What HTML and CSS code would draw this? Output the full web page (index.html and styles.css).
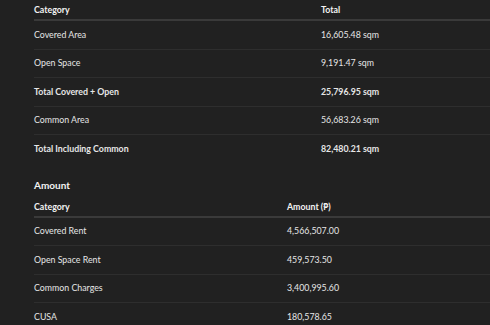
FILE: index.html
```html
<!DOCTYPE html>
<html lang="en">
<head>
	<meta charset="UTF-8">
	<meta name="viewport" content="width=device-width, initial-scale=1.0">
	<title>Area and Amount</title>
	<link rel="stylesheet" href="styles.css">
</head>
<body>

	<div class="summary">

		<table class="summary-table summary-area">
			<thead>
				<tr>
					<th>Category</th>
					<th>Total</th>
				</tr>
			</thead>
			<tbody>
				<tr>
					<td>Covered Area</td>
					<td>16,605.48 sqm</td>
				</tr>
				<tr>
					<td>Open Space</td>
					<td>9,191.47 sqm</td>
				</tr>
				<tr class="summary-total">
					<td>Total Covered + Open</td>
					<td>25,796.95 sqm</td>
				</tr>
				<tr>
					<td>Common Area</td>
					<td>56,683.26 sqm</td>
				</tr>
				<tr class="summary-total">
					<td>Total Including Common</td>
					<td>82,480.21 sqm</td>
				</tr>
			</tbody>
		</table>

		<h2 class="summary-title">Amount</h2>

		<table class="summary-table summary-amount">
			<thead>
				<tr>
					<th>Category</th>
					<th>Amount (&#8369;)</th>
				</tr>
			</thead>
			<tbody>
				<tr>
					<td>Covered Rent</td>
					<td>4,566,507.00</td>
				</tr>
				<tr>
					<td>Open Space Rent</td>
					<td>459,573.50</td>
				</tr>
				<tr>
					<td>Common Charges</td>
					<td>3,400,995.60</td>
				</tr>
				<tr>
					<td>CUSA</td>
					<td>180,578.65</td>
				</tr>
			</tbody>
		</table>

	</div>

</body>
</html>
```

FILE: styles.css
```css
html, body {
	margin: 0;
	padding: 0;
	background-color: #212121;
	overflow: hidden;
}
body {
	font-family: Lato, "Noto Sans", sans-serif;
	font-size: 8.8px;
	color: #e6e6e6;
}
.summary {
	padding-left: 34px;
	width: 480px;
}
.summary-table {
	width: 100%;
	border-collapse: collapse;
}
.summary-table th {
	text-align: left;
	font-weight: bold;
	color: #f2f2f2;
	line-height: 15px;
	padding: 2px 0;
	border-bottom: 2px solid #3a3a3a;
}
.summary-table td {
	line-height: 14.5px;
	padding: 6.5px 0;
	border-bottom: 1px solid #2e2e2e;
}
.summary-table tbody tr:last-child td {
	border-bottom: none;
}
.summary-area th:first-child,
.summary-area td:first-child {
	width: 287px;
}
.summary-amount th:first-child,
.summary-amount td:first-child {
	width: 253px;
}
.summary-total td {
	font-weight: bold;
}
.summary-title {
	margin: 15px 0 0;
	font-size: 10px;
	font-weight: bold;
	line-height: 15px;
	color: #f2f2f2;
}
.summary-amount th {
	padding-top: 6px;
}
```
